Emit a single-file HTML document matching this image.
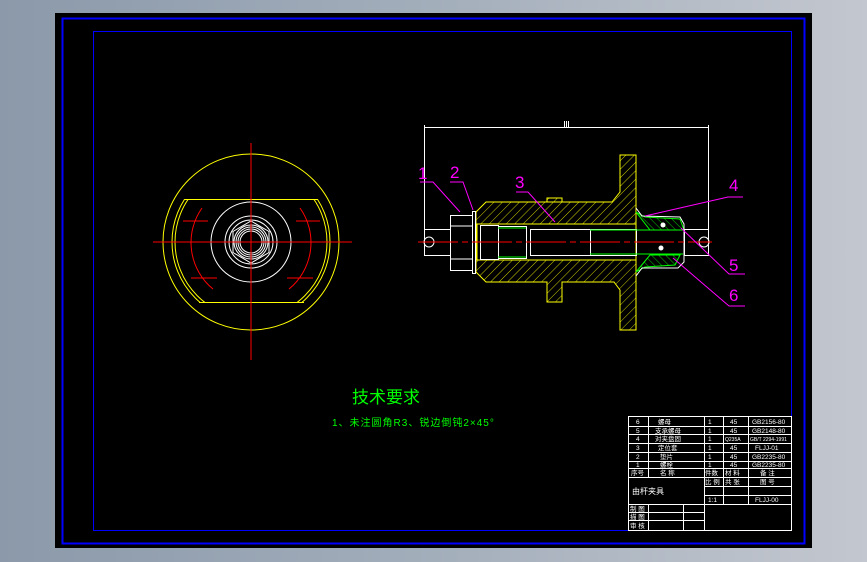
<!DOCTYPE html>
<html><head><meta charset="utf-8"><style>
html,body{margin:0;padding:0;width:867px;height:562px;overflow:hidden;background:linear-gradient(90deg,#8b99aa 0%,#a3aebb 50%,#c3c7cf 100%);}
svg{position:absolute;left:0;top:0;}
text{font-family:"Liberation Sans","Noto Sans CJK SC",sans-serif;}
</style></head><body>
<svg width="867" height="562" viewBox="0 0 867 562">
<defs>
<pattern id="h" width="6" height="6" patternUnits="userSpaceOnUse" patternTransform="rotate(45)">
<line x1="0" y1="0" x2="0" y2="6" stroke="#ffff00" stroke-width="0.8"/></pattern>
<pattern id="g" width="5" height="5" patternUnits="userSpaceOnUse" patternTransform="rotate(-45)">
<line x1="0" y1="0" x2="0" y2="5" stroke="#00ff00" stroke-width="0.8"/></pattern>
<clipPath id="flat"><rect x="150" y="199" width="200" height="103"/></clipPath>
</defs>
<rect x="55" y="13" width="757" height="535" fill="#000"/>
<rect x="62.5" y="18.5" width="742" height="525" fill="none" stroke="#0000ff" stroke-width="2"/>
<rect x="93.5" y="31.5" width="698" height="499" fill="none" stroke="#0000ff" stroke-width="1"/>

<!-- left view -->
<g fill="none">
<circle cx="251" cy="242" r="88" stroke="#ffff00" stroke-width="1"/>
<g clip-path="url(#flat)">
<circle cx="251" cy="242" r="79" stroke="#ffff00"/>
<circle cx="251" cy="242" r="76" stroke="#ffff00"/>
</g>
<line x1="185" y1="199.5" x2="318" y2="199.5" stroke="#ffff00"/>
<line x1="199" y1="302.5" x2="304" y2="302.5" stroke="#ffff00"/>
<circle cx="251" cy="242" r="40" stroke="#fff"/>
<circle cx="251" cy="242" r="26" stroke="#fff"/>
<circle cx="251" cy="242" r="22" stroke="#fff"/>
<polygon points="251,221 269,231.5 269,252.5 251,263 233,252.5 233,231.5" stroke="#fff"/>
<circle cx="251" cy="242" r="17" stroke="#fff"/>
<circle cx="251" cy="242" r="15" stroke="#fff"/>
<circle cx="251" cy="242" r="13" stroke="#fff"/>
<circle cx="251" cy="242" r="11" stroke="#fff"/>
<path d="M202,208 A60,60 0 0 0 213,289" stroke="#ff0000"/>
<path d="M300,208 A60,60 0 0 1 289,289" stroke="#ff0000"/>
</g>
<g stroke="#ff0000" stroke-width="1">
<line x1="153" y1="242" x2="352" y2="242"/>
<line x1="251" y1="143" x2="251" y2="360"/>
<line x1="183" y1="221" x2="208" y2="221"/><line x1="191" y1="278" x2="217" y2="278"/>
<line x1="296" y1="221" x2="320" y2="221"/><line x1="287" y1="278" x2="313" y2="278"/>
</g>

<!-- right view -->
<g stroke="#fff" fill="none">
<line x1="424.5" y1="127.5" x2="708.5" y2="127.5"/>
<line x1="424.5" y1="125" x2="424.5" y2="255"/>
<line x1="708.5" y1="125" x2="708.5" y2="255"/>
<line x1="564.5" y1="121" x2="564.5" y2="127"/><line x1="566.5" y1="121" x2="566.5" y2="127"/><line x1="568.5" y1="121" x2="568.5" y2="127"/>
<rect x="424.5" y="229.5" width="26" height="26"/>
<rect x="684.5" y="229.5" width="24" height="26"/>
<circle cx="429" cy="242" r="5"/><circle cx="704" cy="242" r="5"/>
</g>
<path d="M486,202 L612,202 L620,192 L620,155 L636,155 L636,330 L620,330 L620,290 L614,282 L562,282 L562,302 L547,302 L547,282 L486,282 L476,272 L476,212 Z M547,202 L547,198 L562,198 L562,202 Z" fill="url(#h)" stroke="#ffff00"/>
<rect x="477" y="224" width="159" height="36" fill="#000" stroke="#ffff00"/>
<g stroke="#fff" fill="none">
<rect x="450.5" y="215.5" width="22" height="55"/>
<line x1="450" y1="226" x2="472" y2="226"/><line x1="450" y1="259" x2="472" y2="259"/>
<rect x="472.5" y="211.5" width="3" height="62"/>
<rect x="480.5" y="225.5" width="18" height="34"/>
<rect x="498.5" y="226.5" width="28" height="32"/>
<rect x="530.5" y="229.5" width="60" height="26"/>
<rect x="590.5" y="229.5" width="46" height="26"/>
</g>
<g stroke="#00ff00">
<line x1="498" y1="228" x2="526" y2="228"/><line x1="498" y1="257" x2="526" y2="257"/>
<line x1="590" y1="230" x2="683" y2="230"/><line x1="590" y1="254" x2="683" y2="254"/>
</g>
<path d="M636,212 L645,217 L680,219 L684,230 L650,230 Z" fill="url(#g)" stroke="#00ff00"/>
<path d="M636,272 L645,267 L675,265 L680,255 L650,255 Z" fill="url(#g)" stroke="#00ff00"/>
<path d="M636,208 L642,216 L680,217 L684,224 L684,262 L678,268 L642,268 L636,276" fill="none" stroke="#fff"/>
<circle cx="663" cy="225" r="2.5" fill="#fff"/><circle cx="661" cy="248" r="2.5" fill="#fff"/>
<g stroke="#ff0000"><line x1="418" y1="242" x2="712" y2="242" stroke-dasharray="40,4,6,4"/></g>

<!-- leaders -->
<g stroke="#ff00ff" fill="none">
<polyline points="420,182 433,182 460,212"/>
<polyline points="450,182 463,182 473,210"/>
<polyline points="516,192 528,192 555,222"/>
<polyline points="743,197 728,197 645,216"/>
<polyline points="745,274 729,274 681,228"/>
<polyline points="745,306 729,306 673,258"/>
</g>
<g fill="#ff00ff" font-size="17">
<text x="418" y="179">1</text><text x="450" y="178">2</text><text x="515" y="188">3</text>
<text x="729" y="191">4</text><text x="729" y="271">5</text><text x="729" y="301">6</text>
</g>

<!-- text -->
<text x="352" y="403" fill="#00ff00" font-size="17">技术要求</text>
<text x="332" y="426" fill="#00ff00" font-size="10" letter-spacing="1">1、未注圆角R3、锐边倒钝2×45°</text>

<!-- title block -->
<g stroke="#fff" fill="none" stroke-width="1">
<rect x="628.5" y="416.5" width="163" height="114"/>
<line x1="628" y1="426.5" x2="791" y2="426.5"/><line x1="628" y1="434.5" x2="791" y2="434.5"/>
<line x1="628" y1="443.5" x2="791" y2="443.5"/><line x1="628" y1="452.5" x2="791" y2="452.5"/>
<line x1="628" y1="461.5" x2="791" y2="461.5"/><line x1="628" y1="468.5" x2="791" y2="468.5"/>
<line x1="628" y1="477.5" x2="791" y2="477.5"/>
<line x1="704" y1="486.5" x2="791" y2="486.5"/><line x1="704" y1="495.5" x2="791" y2="495.5"/>
<line x1="628" y1="504.5" x2="791" y2="504.5"/><line x1="628" y1="512.5" x2="704" y2="512.5"/>
<line x1="628" y1="520.5" x2="704" y2="520.5"/>
<line x1="648.5" y1="416" x2="648.5" y2="477"/>
<line x1="704.5" y1="416" x2="704.5" y2="530"/>
<line x1="723.5" y1="416" x2="723.5" y2="504"/>
<line x1="748.5" y1="416" x2="748.5" y2="504"/>
<line x1="648.5" y1="504" x2="648.5" y2="530"/>
<line x1="683.5" y1="504" x2="683.5" y2="530"/>
</g>
<g fill="#fff" font-size="6.5">
<text x="636" y="424">6</text><text x="658" y="424">螺母</text><text x="708" y="424">1</text><text x="730" y="424">45</text><text x="752" y="424">GB2156-80</text>
<text x="636" y="433">5</text><text x="655" y="433">支承螺母</text><text x="708" y="433">1</text><text x="730" y="433">45</text><text x="752" y="433">GB2148-80</text>
<text x="636" y="441">4</text><text x="655" y="441">对夹盘固</text><text x="708" y="441">1</text><text x="725" y="441" font-size="5">Q235A</text><text x="750" y="441" font-size="5">GB/T 2294-1991</text>
<text x="636" y="450">3</text><text x="658" y="450">定位套</text><text x="708" y="450">1</text><text x="730" y="450">45</text><text x="755" y="450">FLJJ-01</text>
<text x="636" y="459">2</text><text x="660" y="459">垫片</text><text x="708" y="459">1</text><text x="730" y="459">45</text><text x="752" y="459">GB2235-80</text>
<text x="636" y="467">1</text><text x="660" y="467">螺栓</text><text x="708" y="467">1</text><text x="730" y="467">45</text><text x="752" y="467">GB2235-80</text>
<text x="631" y="475">序号</text><text x="660" y="475">名 称</text><text x="705" y="475">件数</text><text x="725" y="475">材 料</text><text x="760" y="475">备 注</text>
<text x="632" y="494" font-size="8">由杆夹具</text>
<text x="705" y="484">比 例</text><text x="725" y="484">共 张</text><text x="760" y="484">图 号</text>
<text x="708" y="502">1:1</text><text x="755" y="502">FLJJ-00</text>
<text x="630" y="511">制 图</text><text x="630" y="519">描 图</text><text x="630" y="528">审 核</text>
</g>
</svg>
</body></html>
